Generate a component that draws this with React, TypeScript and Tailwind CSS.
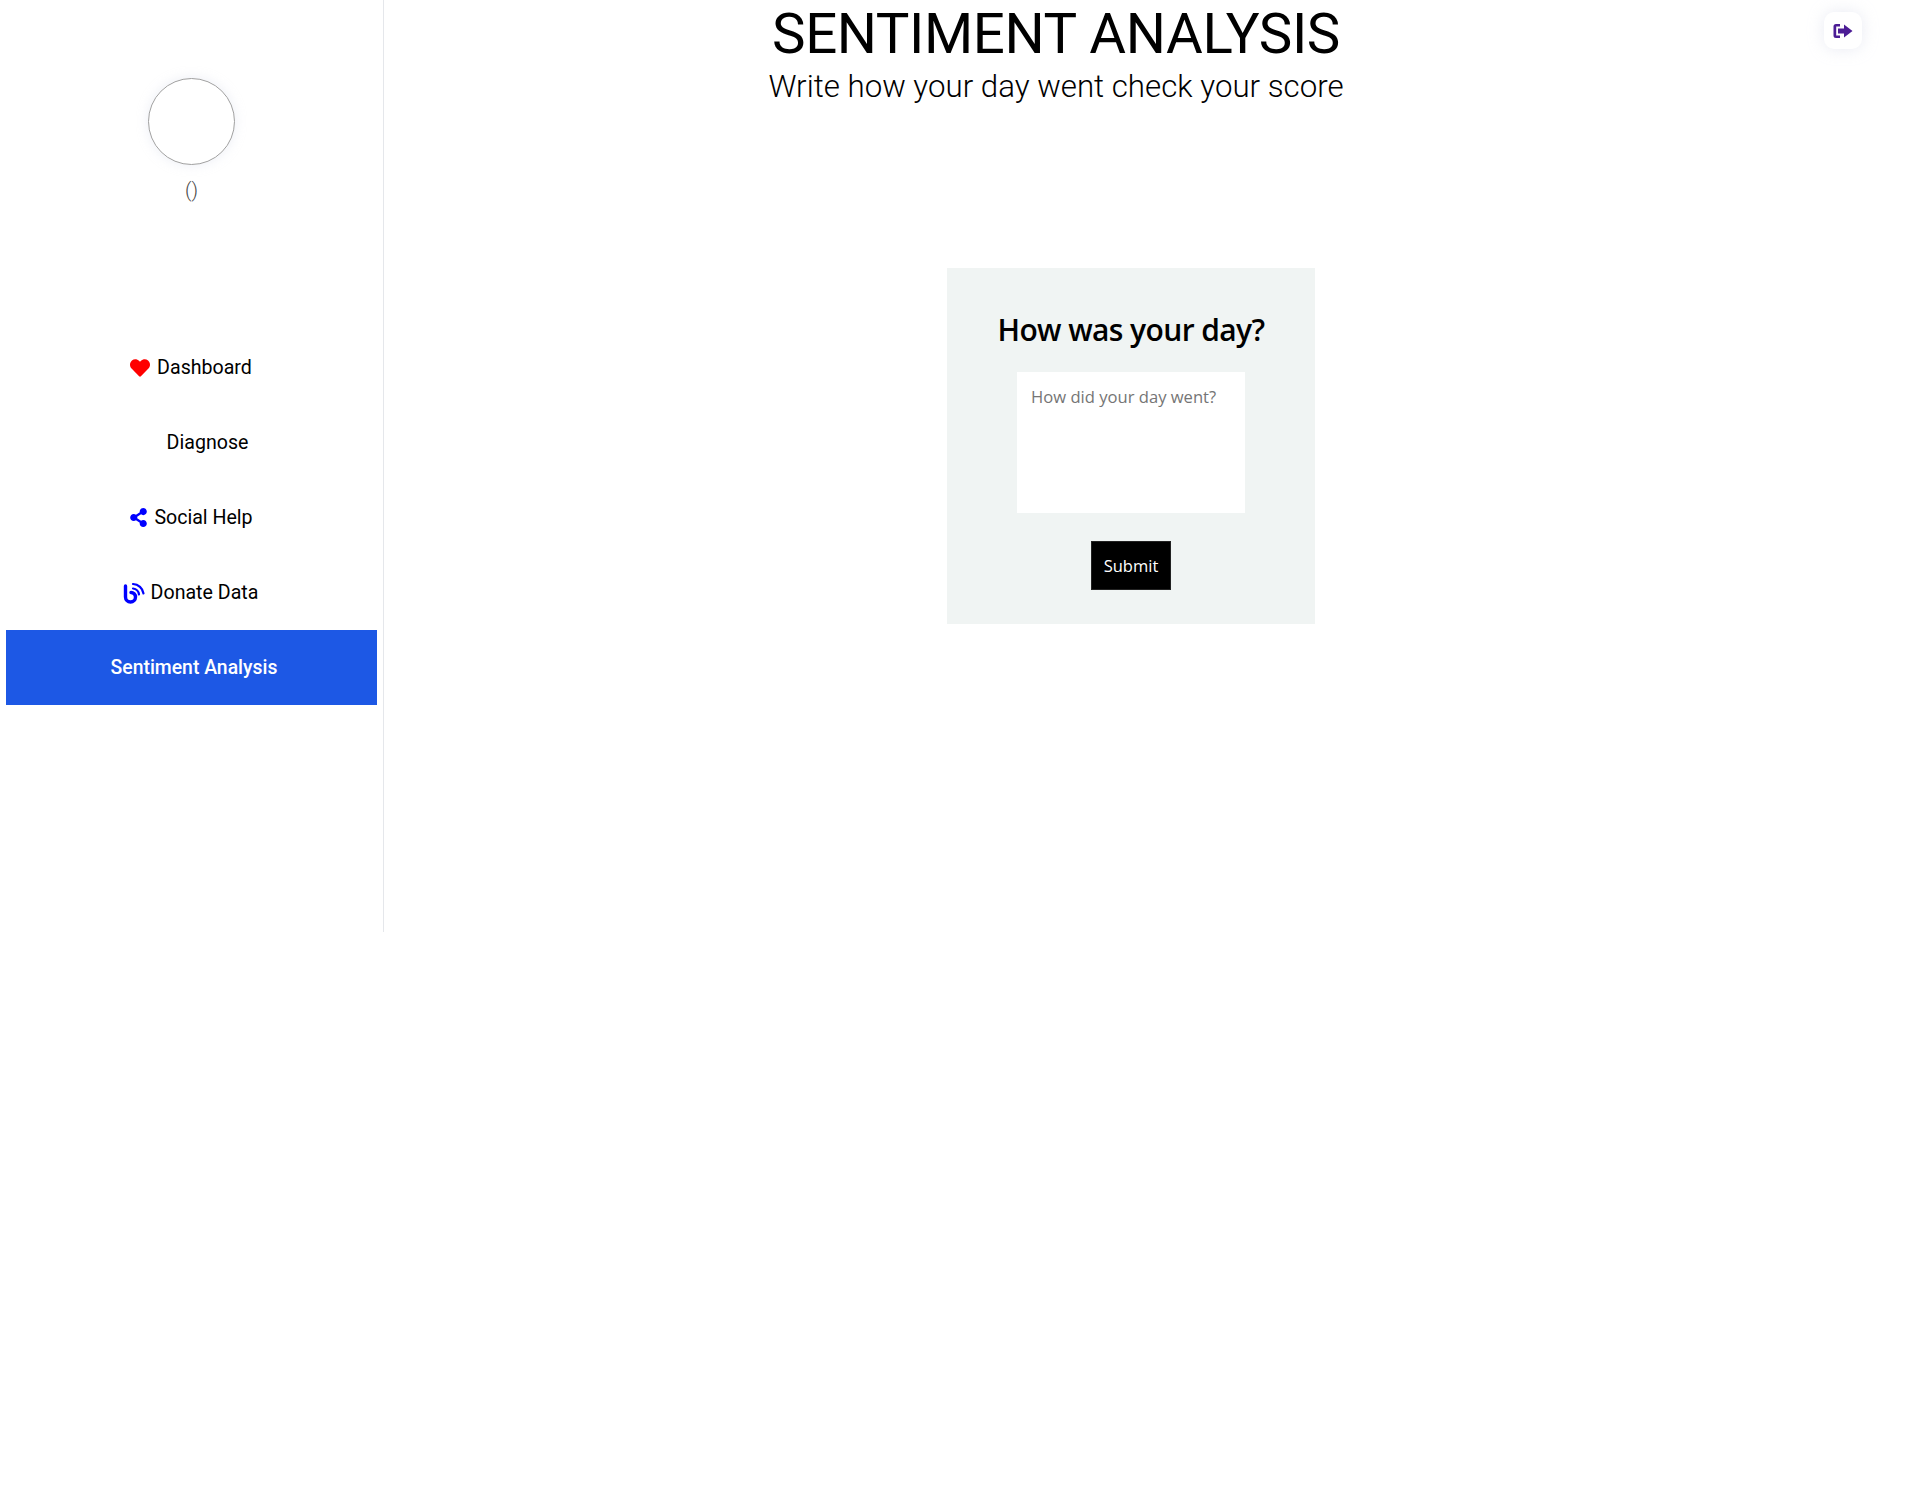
import { FaHeart, FaShareAlt } from "react-icons/fa";

const roboto = "font-['Roboto',sans-serif]";
const openSans = "font-['Open_Sans',sans-serif]";

function DonateIcon() {
  return (
    <svg width="22" height="22" viewBox="0 0 22 22" fill="none" stroke="#0000ff" strokeLinecap="round">
      <path d="M2.500 4v11a5 5 0 0 0 10 0 4.500 4.500 0 0 0-4.500-4.500" strokeWidth="3.400" />
      <path d="M10 6.500a7 7 0 0 1 6 6" strokeWidth="2.200" />
      <path d="M10 2a11 11 0 0 1 10.500 9.500" strokeWidth="2.200" />
    </svg>
  );
}

function LogoutIcon() {
  return (
    <svg width="20" height="16" viewBox="0 0 20 16" fill="#4c1d95">
      <path d="M7 1H3a2.500 2.500 0 0 0-2.500 2.500v9A2.500 2.500 0 0 0 3 15h4v-2.500H3.200v-9H7z" />
      <path d="M5 5.500h6V1.500L19.500 8 11 14.500v-4H5z" />
    </svg>
  );
}

const menu = [
  { label: "Dashboard", icon: <FaHeart className="text-[20px] text-[#ff0000]" />, gap: "gap-[7px] pr-[1px]" },
  { label: "Diagnose", icon: <span className="w-[32px]" />, gap: "" },
  { label: "Social Help", icon: <FaShareAlt className="text-[19px] text-[#0000ff]" />, gap: "gap-[6px] pr-[1px]" },
  { label: "Donate Data", icon: <DonateIcon />, gap: "gap-[6px] pr-[2px]" },
];

export default function App() {
  return (
    <div className={`relative min-h-[1505px] bg-white text-black ${roboto}`}>
      <div className="flex items-start">
        <aside className="flex h-[932px] w-[384px] shrink-0 flex-col items-stretch border-r border-[#e5e7eb] px-[6px]">
          <div className="mt-[78px] flex flex-col items-center">
            <div className="h-[87px] w-[87px] rounded-full border border-[#a0a0a0] shadow-[0_0_12px_rgba(200,205,225,0.35)]" />
            <p className="mt-[11px] text-[20px] font-light leading-[28px] text-[#4a4a4a]">()</p>
          </div>
          <nav className="mt-[126px] flex flex-col">
            {menu.map((item) => (
              <a key={item.label} className={`flex h-[75px] items-center justify-center text-[19.600px] ${item.gap}`}>
                {item.icon}
                <span>{item.label}</span>
              </a>
            ))}
            <a className="flex h-[75px] items-center justify-center bg-[#1d58e5] pl-[5px] text-[19.400px] font-medium text-white">
              Sentiment Analysis
            </a>
          </nav>
        </aside>

        <main className="flex-1">
          <div className="mr-[192px] pt-[1px] text-center">
            <h1 className="text-[56.400px] font-normal leading-[66px] tracking-[-0.4px]">SENTIMENT ANALYSIS</h1>
            <p className="text-[31.250px] font-light leading-[40px]">Write how your day went check your score</p>
          </div>
          <div className={`ml-[563px] mt-[161px] flex h-[356px] w-[368px] flex-col items-center bg-[#f0f4f3] pt-[42px] ${openSans}`}>
            <h2 className="text-[30px] font-semibold leading-[40px] tracking-[-0.6px]">How was your day?</h2>
            <textarea
              placeholder="How did your day went?"
              className="mt-[22px] h-[141px] w-[228px] resize-none bg-white px-[14px] pb-[12px] pt-[13px] text-[16.600px] leading-[24px] outline-none placeholder:text-[#757575]"
            />
            <button className="mt-[28px] h-[49px] w-[80px] border border-[#222222] bg-black pt-[1px] text-[16.500px] text-white">
              Submit
            </button>
          </div>
        </main>
      </div>

      <button className="absolute right-[58px] top-[12px] flex h-[37px] w-[38px] items-center justify-center rounded-[10px] bg-white shadow-[0_0_16px_rgba(200,205,225,0.4)]">
        <LogoutIcon />
      </button>
    </div>
  );
}
